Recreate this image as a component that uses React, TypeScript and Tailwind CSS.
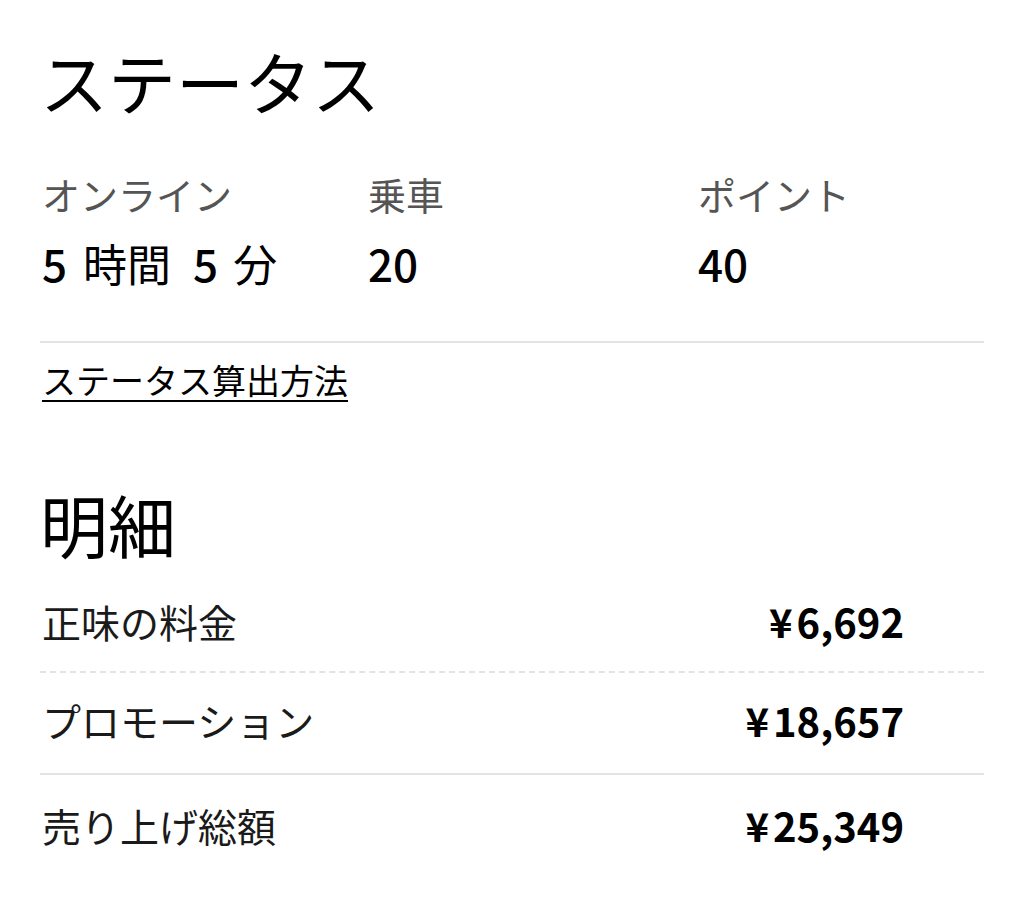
import React from "react";

const jp = { fontFamily: '"Noto Sans CJK JP", "Noto Sans", sans-serif' };

function Amount({ v }: { v: string }) {
  return (
    <span className="text-[40px] leading-[50px] font-bold">
      <span className="mr-[4px]">¥</span>
      {v}
    </span>
  );
}

export default function App() {
  return (
    <div className="w-[1024px] h-[897px] bg-white text-black overflow-hidden" style={jp}>
      <div className="pl-[40px] pr-[40px] pt-[41px]">
        <h1 className="text-[68px] leading-[80px] font-normal">ステータス</h1>
        <div className="grid grid-cols-[326px_330px_1fr] mt-[48px] pl-[2px]">
          <div>
            <div className="text-[38px] leading-[50px] text-[#555555]">オンライン</div>
            <div className="flex text-[44px] leading-[56px] mt-[16px]">
              <span className="font-medium mr-[16px]">5</span>
              <span className="mr-[22px]">時間</span>
              <span className="font-medium mr-[15px]">5</span>
              <span>分</span>
            </div>
          </div>
          <div>
            <div className="text-[38px] leading-[50px] text-[#555555]">乗車</div>
            <div className="text-[44px] leading-[56px] font-medium mt-[16px]">20</div>
          </div>
          <div>
            <div className="text-[38px] leading-[50px] text-[#555555]">ポイント</div>
            <div className="text-[44px] leading-[56px] font-medium mt-[16px]">40</div>
          </div>
        </div>
        <div className="h-[2px] bg-[#e3e3e3] mt-[50px]" />
        <div className="mt-[15px] pl-[2px]">
          <a className="text-[34px] leading-[44px] underline underline-offset-[6px] decoration-2">ステータス算出方法</a>
        </div>
        <h2 className="text-[68px] leading-[80px] font-normal mt-[82px]">明細</h2>
        <div>
          <div className="flex justify-between pl-[2px] pr-[80px] pt-[32px] pb-[25px]">
            <span className="text-[39px] leading-[50px] text-[#1a1a1a]">正味の料金</span>
            <Amount v="6,692" />
          </div>
          <div className="border-t-2 border-dashed border-[#e3e3e3]" />
          <div className="flex justify-between pl-[2px] pr-[80px] pt-[22px] pb-[28px]">
            <span className="text-[39px] leading-[50px] text-[#1a1a1a]">プロモーション</span>
            <Amount v="18,657" />
          </div>
          <div className="h-[2px] bg-[#e3e3e3]" />
          <div className="flex justify-between pl-[2px] pr-[80px] pt-[25px] pb-[25px]">
            <span className="text-[39px] leading-[50px] text-[#1a1a1a]">売り上げ総額</span>
            <Amount v="25,349" />
          </div>
        </div>
      </div>
    </div>
  );
}
